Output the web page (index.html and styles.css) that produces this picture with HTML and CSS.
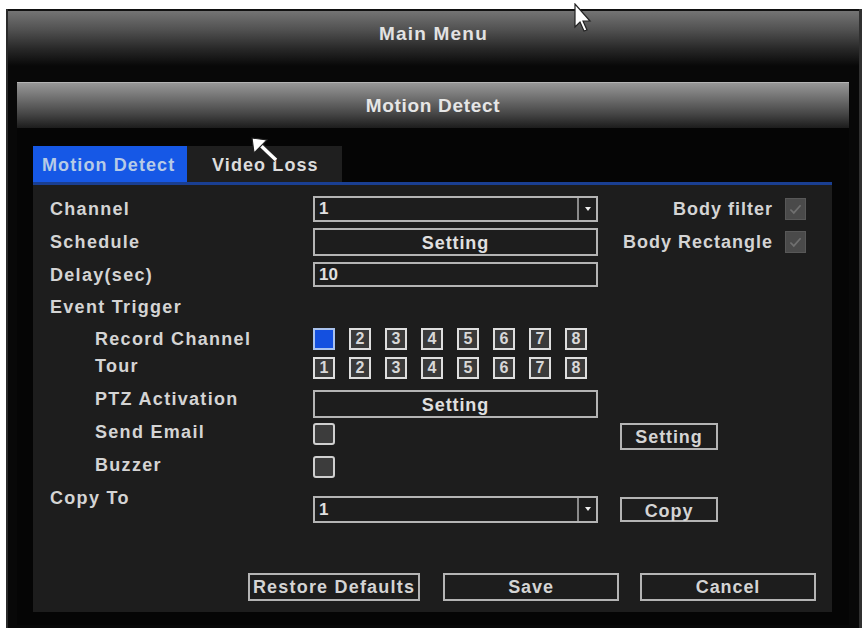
FILE: index.html
```html
<!DOCTYPE html>
<html lang="en">

<head>
    <meta charset="UTF-8">
    <meta name="viewport" content="width=device-width, initial-scale=1.0">
    <title>Motion Detect</title>
    <link rel="stylesheet" href="styles.css">
</head>

<body>
    <div class="window">
        <div class="titlebar">Main Menu</div>
        <div class="dialog">
            <div class="dialog-head">Motion Detect</div>
            <div class="dialog-body">
                <ul class="tabs">
                    <li class="tab active">Motion Detect</li>
                    <li class="tab">Video Loss</li>
                </ul>
                <div class="panel">
                    <div class="row r-channel">
                        <span class="label">Channel</span>
                        <div class="field select"><span>1</span><i class="arrow"></i></div>
                        <div class="side"><span>Body filter</span><b class="tick"><svg viewBox="0 0 20 20"><polyline points="4,10 8,14 16,5"/></svg></b></div>
                    </div>
                    <div class="row r-schedule">
                        <span class="label">Schedule</span>
                        <div class="field btn">Setting</div>
                        <div class="side"><span>Body Rectangle</span><b class="tick"><svg viewBox="0 0 20 20"><polyline points="4,10 8,14 16,5"/></svg></b></div>
                    </div>
                    <div class="row r-delay">
                        <span class="label">Delay(sec)</span>
                        <div class="field"><span>10</span></div>
                    </div>
                    <div class="row r-event">
                        <span class="label">Event Trigger</span>
                    </div>
                    <div class="row r-record">
                        <span class="label sub">Record Channel</span>
                        <div class="nums">
                            <b class="on"></b><b>2</b><b>3</b><b>4</b><b>5</b><b>6</b><b>7</b><b>8</b>
                        </div>
                    </div>
                    <div class="row r-tour">
                        <span class="label sub">Tour</span>
                        <div class="nums">
                            <b>1</b><b>2</b><b>3</b><b>4</b><b>5</b><b>6</b><b>7</b><b>8</b>
                        </div>
                    </div>
                    <div class="row r-ptz">
                        <span class="label sub">PTZ Activation</span>
                        <div class="field btn">Setting</div>
                    </div>
                    <div class="row r-email">
                        <span class="label sub">Send Email</span>
                        <div><b class="check"></b></div>
                        <div class="small-btn">Setting</div>
                    </div>
                    <div class="row r-buzzer">
                        <span class="label sub">Buzzer</span>
                        <div><b class="check"></b></div>
                    </div>
                    <div class="row r-copy">
                        <span class="label">Copy To</span>
                        <div class="field select"><span>1</span><i class="arrow"></i></div>
                        <div class="small-btn">Copy</div>
                    </div>
                    <div class="actions">
                        <div class="act restore">Restore Defaults</div>
                        <div class="act">Save</div>
                        <div class="act">Cancel</div>
                    </div>
                </div>
            </div>
        </div>
    </div>

    <!-- mouse pointers in the shot -->
    <svg class="cursor c1" width="20" height="30" viewBox="0 0 20 30">
        <path d="M1,1 L1,24 L6,19 L10,28 L13,27 L9,18 L16,18 Z" fill="#fff" stroke="#222" stroke-width="1.2"/>
    </svg>
    <svg class="cursor c2" width="30" height="28" viewBox="0 0 30 28">
        <line x1="7" y1="6" x2="26" y2="24" stroke="#222" stroke-width="6"/>
        <line x1="7" y1="6" x2="26" y2="24" stroke="#fff" stroke-width="3.5"/>
        <path d="M2,2 L17,4 L4,17 Z" fill="#fff" stroke="#222" stroke-width="1.2"/>
    </svg>
</body>

</html>
```

FILE: styles.css
```css
* {
    margin: 0;
    padding: 0;
    box-sizing: border-box;
}

li {
    list-style: none;
}

body {
    background-color: #fff;
    font-family: "Liberation Sans", Arial, sans-serif;
    font-weight: bold;
    color: #d4d4d4;
}

.window {
    margin: 9px 0 0 6px;
    width: 856px;
    height: 619px;
    background-color: #080808;
    border-left: 2px solid #2a2a2a;
    border-right: 3px solid #303030;
}

.titlebar {
    height: 63px;
    border-top: 2px solid #111;
    padding-top: 13px;
    line-height: 20px;
    font-size: 19px;
    letter-spacing: 1.2px;
    text-align: center;
    color: #e2e2e2;
    background: linear-gradient(#747474 0%, #525252 30%, #282828 62%, #080808 90%);
}

.dialog {
    margin: 10px 10px 0 9px;
}

.dialog-head {
    height: 46px;
    line-height: 46px;
    font-size: 19px;
    letter-spacing: 0.7px;
    text-align: center;
    color: #e6e6e6;
    border-top: 1px solid #b4b4b4;
    background: linear-gradient(#979797 0%, #6e6e6e 35%, #444 70%, #1c1c1c 100%);
}

.dialog-body {
    background-color: #050505;
    padding: 18px 17px 13px 16px;
}

.tabs {
    display: flex;
    height: 36px;
}

.tab {
    width: 155px;
    line-height: 38px;
    padding-left: 25px;
    font-size: 18px;
    letter-spacing: 1.1px;
    background-color: #1f1f1f;
    color: #dcdcdc;
}

.tab.active {
    width: 154px;
    padding-left: 9px;
    background-color: #1658e6;
    color: #b6cbe6;
}

.panel {
    height: 430px;
    border-top: 3px solid #1a3f92;
    background-color: #1d1d1d;
    padding: 11px 16px 0 17px;
}

.row {
    display: grid;
    grid-template-columns: 263px 285px 22px 186px;
    align-items: center;
}

.row > :nth-child(3) {
    grid-column: 4;
}

.label {
    font-size: 18px;
    letter-spacing: 1.3px;
    line-height: 20px;
}

.label.sub {
    padding-left: 45px;
}

.r-channel { height: 26px; }
.r-schedule { height: 28px; margin-top: 6px; }
.r-delay { height: 25px; margin-top: 6px; }
.r-event { height: 26px; margin-top: 7px; }
.r-record { height: 22px; margin-top: 8px; }
.r-tour { height: 22px; margin-top: 7px; }
.r-ptz { height: 28px; margin-top: 11px; }
.r-email { height: 27px; margin-top: 5px; align-items: start; }
.r-buzzer { height: 22px; margin-top: 6px; }
.r-copy { height: 27px; margin-top: 18px; }

.r-tour .label,
.r-ptz .label,
.r-email .label,
.r-buzzer .label {
    align-self: start;
    margin-top: -1px;
}

.r-copy .label {
    align-self: start;
    margin-top: -8px;
}

.field {
    height: 100%;
    border: 2px solid #b4b4b4;
    font-size: 17px;
    display: flex;
    align-items: center;
    padding-left: 4px;
    color: #e0e0e0;
}

.field.btn {
    justify-content: center;
    letter-spacing: 0.9px;
    font-size: 18px;
    padding-left: 0;
    padding-top: 2px;
}

.field.select span {
    flex: 1;
}

.arrow {
    width: 19px;
    height: 100%;
    border-left: 2px solid #8a8a8a;
    position: relative;
}

.arrow::after {
    content: "";
    position: absolute;
    left: 6px;
    top: 9px;
    border-left: 3px solid transparent;
    border-right: 3px solid transparent;
    border-top: 4px solid #eee;
}

.side {
    display: flex;
    justify-content: flex-end;
    align-items: center;
    gap: 12px;
    font-size: 18px;
    letter-spacing: 1px;
}

.tick {
    width: 21px;
    height: 22px;
    background-color: #4a4a4a;
    border: 1px solid #585858;
    display: flex;
    align-items: center;
    justify-content: center;
}

.tick svg {
    width: 17px;
    height: 17px;
    fill: none;
    stroke: #707070;
    stroke-width: 2;
}

.nums {
    display: flex;
    gap: 14px;
}

.nums b {
    width: 22px;
    height: 22px;
    border: 2px solid #dedede;
    background-color: #3a3a3a;
    font-size: 16px;
    line-height: 18px;
    text-align: center;
    color: #d8d8d8;
}

.nums b.on {
    background-color: #1450e0;
    border-color: #a9c2ee;
}

.check {
    display: block;
    width: 22px;
    height: 22px;
    border: 2px solid #cfcfcf;
    border-radius: 3px;
    background-color: #3c3c3c;
}

.small-btn {
    width: 98px;
    border: 2px solid #b4b4b4;
    text-align: center;
    font-size: 18px;
    letter-spacing: 0.9px;
}

.r-email .small-btn {
    height: 27px;
    line-height: 24px;
}

.r-copy .small-btn {
    height: 25px;
    line-height: 24px;
}

.actions {
    display: flex;
    justify-content: flex-end;
    margin-top: 50px;
}

.act {
    width: 176px;
    height: 28px;
    border: 2px solid #b4b4b4;
    text-align: center;
    line-height: 25px;
    font-size: 18px;
    letter-spacing: 0.9px;
    margin-left: 21px;
}

.act.restore {
    width: 172px;
    letter-spacing: 1.2px;
    margin-right: 2px;
}

.cursor {
    position: absolute;
}

.c1 {
    left: 574px;
    top: 3px;
}

.c2 {
    left: 250px;
    top: 136px;
}
```
